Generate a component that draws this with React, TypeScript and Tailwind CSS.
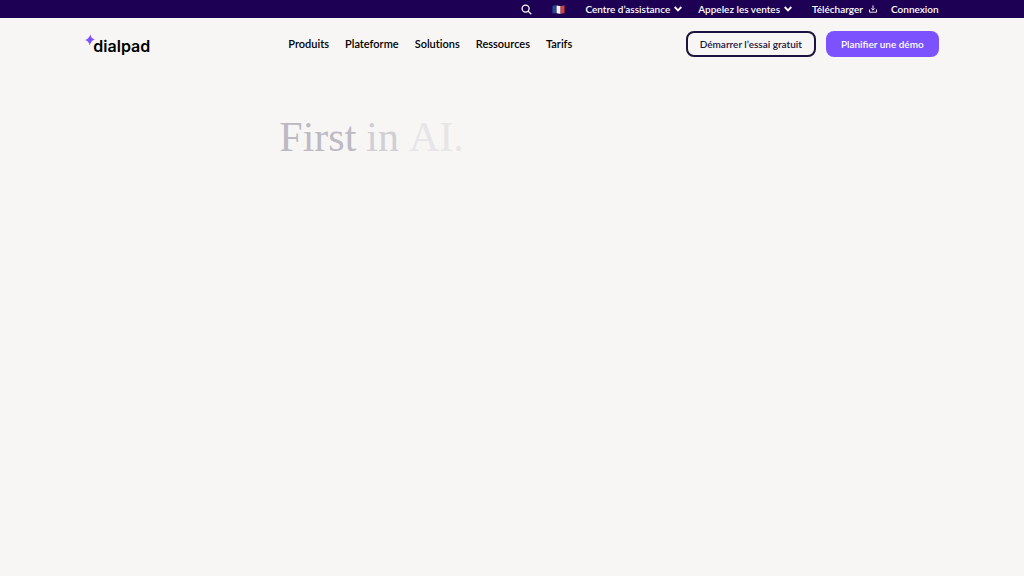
import type { ReactNode } from 'react';

const navItems = ['Produits', 'Plateforme', 'Solutions', 'Ressources', 'Tarifs'];

const headline = [
  { word: 'First', tone: 'text-[#bdbac4]' },
  { word: 'in', tone: 'text-[#d0cfd4]' },
  { word: 'AI.', tone: 'text-[#e6e5e7]' },
];

function Chevron() {
  return (
    <svg viewBox="0 0 8 6" className="h-1.5 w-2" fill="none" stroke="currentColor" strokeWidth="1.8" aria-hidden="true">
      <path d="M0.7 1 L4 4.4 L7.3 1" />
    </svg>
  );
}

function DownloadIcon() {
  return (
    <svg viewBox="0 0 8 8" className="size-2" fill="none" stroke="currentColor" strokeWidth="0.9" aria-hidden="true">
      <path d="M4 0.3 V5 M2.2 3.4 L4 5.2 L5.8 3.4 M0.5 4.5 V7.2 H7.5 V4.5" />
    </svg>
  );
}

function FrenchFlag() {
  return (
    <svg viewBox="0 0 13 9" className="h-[9px] w-[13px]" aria-hidden="true">
      <path d="M0.5 0.8 Q2.5 0.1 4.6 0.5 V8.3 Q2.5 7.9 0.5 8.5 Z" fill="#2a4a94" />
      <path d="M4.6 0.5 Q6.5 1 8.6 0.9 V8.7 Q6.5 8.8 4.6 8.3 Z" fill="#f4f1f4" />
      <path d="M8.6 0.9 Q10.8 0.8 12.5 0.3 V8 Q10.8 8.6 8.6 8.7 Z" fill="#d6403f" />
    </svg>
  );
}

function UtilityButton({ children }: { children: ReactNode }) {
  return (
    <button type="button" className="flex items-center gap-1">
      {children}
      <Chevron />
    </button>
  );
}

export default function App() {
  return (
    <div className="min-h-screen bg-[#f7f6f5] font-['Lato',sans-serif] text-black">
      <div className="bg-[#1d0053] text-white">
        <div className="mx-auto flex h-[18px] w-5/6 items-center justify-end text-[10px] leading-none font-semibold whitespace-nowrap">
          <button type="button" aria-label="Rechercher" className="mr-5">
            <svg viewBox="0 0 11 11" className="size-[11px]" fill="none" stroke="currentColor" strokeWidth="1.3" aria-hidden="true">
              <circle cx="4.6" cy="4.6" r="3.5" />
              <path d="M7.1 7.1 L10.3 10.3" />
            </svg>
          </button>
          <button type="button" aria-label="Langue : français" className="mr-5">
            <FrenchFlag />
          </button>
          <div className="flex items-center gap-4">
            <UtilityButton>Centre d’assistance</UtilityButton>
            <UtilityButton>Appelez les ventes</UtilityButton>
          </div>
          <a href="#telecharger" className="ml-5 flex items-center gap-1.5">
            Télécharger
            <DownloadIcon />
          </a>
          <a href="#connexion" className="ml-3.5">Connexion</a>
        </div>
      </div>
      <header className="mx-auto flex h-[52px] w-5/6 items-center whitespace-nowrap">
        <a href="#accueil" aria-label="dialpad" className="flex w-[203px] items-center">
          <svg viewBox="0 0 10 12" className="-mr-0.5 mb-2 h-3 w-2.5" aria-hidden="true">
            <path d="M5.4 0.2 C5.7 2.9 6.8 4.5 10 5.4 C7 6.3 6.1 7.6 4.5 11.5 C4.2 8.5 3 6.9 0 6 C3 5.2 4.2 3.4 5.4 0.2 Z" fill="#7c52ff" />
          </svg>
          <span className="pt-1 font-['Inter',sans-serif] text-[16px] leading-5 font-semibold">dialpad</span>
        </a>
        <nav className="flex gap-4 text-[11px] leading-4 font-semibold [font-variant-ligatures:none]">
          {navItems.map((item) => (
            <a key={item} href={`#${item.toLowerCase()}`}>{item}</a>
          ))}
        </nav>
        <div className="ml-auto flex gap-2.5 text-[10px] leading-none font-semibold">
          <button type="button" className="h-[26px] rounded-lg border-2 border-[#1c1440] px-3 text-[#1c1440]">
            Démarrer l’essai gratuit
          </button>
          <button type="button" className="h-[26px] rounded-lg bg-[#7c52ff] px-[15px] text-white">Planifier une démo</button>
        </div>
      </header>
      <main className="mx-auto w-5/6">
        <h1 className="ml-[194px] flex gap-2.5 pt-[43px] font-['Liberation_Serif',serif] text-[42px] leading-12">
          {headline.map(({ word, tone }) => (
            <span key={word} className={tone}>{word}</span>
          ))}
        </h1>
      </main>
    </div>
  );
}
